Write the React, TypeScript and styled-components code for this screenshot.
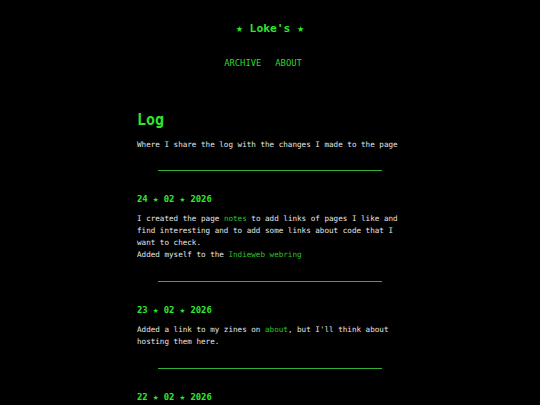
import React from 'react';
import styled, { createGlobalStyle } from 'styled-components';

const GlobalStyle = createGlobalStyle`
  body {
    margin: 0;
    background: #000;
    color: #e6e6e6;
    font-family: 'DejaVu Sans Mono', 'Liberation Mono', monospace;
  }
`;

const Header = styled.header`
  display: flex;
  flex-direction: column;
  align-items: center;
  padding-top: 21px;
`;

const SiteTitle = styled.div`
  color: #2ee62e;
  font-weight: bold;
  font-size: 11.3px;
  line-height: 16px;
`;

const Nav = styled.nav`
  display: flex;
  margin-top: 20px;
`;

const NavLink = styled.a`
  color: #2ed62e;
  text-decoration: none;
  font-size: 8.8px;
  line-height: 12px;
  margin-right: 14px;
`;

const Main = styled.main`
  width: 266px;
  margin: 41px auto 0;
`;

const Title = styled.h1`
  margin: 0;
  color: #2ee62e;
  font-size: 15px;
  line-height: 20px;
`;

const Intro = styled.p`
  margin: 9px 0 0;
  font-size: 7.6px;
  line-height: 12px;
`;

const Entry = styled.section`
  display: flex;
  flex-direction: column;
`;

const Divider = styled.hr`
  width: 224px;
  margin: 19px auto 0;
  border: 0;
  border-top: 1px solid #33b033;
`;

const DateHeading = styled.h2`
  margin: 22px 0 0;
  color: #2ee62e;
  font-size: 8.9px;
  line-height: 12px;
`;

const Body = styled.div`
  margin: 8px 0 1px;
  font-size: 7.6px;
  line-height: 12px;
`;

const GreenLink = styled.a`
  color: #2cc42c;
  text-decoration: none;
`;

interface IEntry {
  date: string;
  lines: React.ReactNode[];
}

const entries: IEntry[] = [
  {
    date: '24 ★ 02 ★ 2026',
    lines: [
      <>
        I created the page <GreenLink href='#'>notes</GreenLink> to add links of pages I like and find
        interesting and to add some links about code that I want to check.
      </>,
      <>
        Added myself to the <GreenLink href='#'>Indieweb webring</GreenLink>
      </>,
    ],
  },
  {
    date: '23 ★ 02 ★ 2026',
    lines: [
      <>
        Added a link to my zines on <GreenLink href='#'>about</GreenLink>, but I'll think about hosting
        them here.
      </>,
    ],
  },
  {
    date: '22 ★ 02 ★ 2026',
    lines: [],
  },
];

const App: React.FC = () => {
  return (
    <>
      <GlobalStyle />
      <Header>
        <SiteTitle>★ Loke's ★</SiteTitle>
        <Nav>
          <NavLink href='#'>ARCHIVE</NavLink>
          <NavLink href='#'>ABOUT</NavLink>
        </Nav>
      </Header>
      <Main>
        <Title>Log</Title>
        <Intro>Where I share the log with the changes I made to the page</Intro>
        {entries.map((entry) => (
          <Entry key={entry.date}>
            <Divider />
            <DateHeading>{entry.date}</DateHeading>
            {entry.lines.length > 0 && (
              <Body>
                {entry.lines.map((line, i) => (
                  <div key={i}>{line}</div>
                ))}
              </Body>
            )}
          </Entry>
        ))}
      </Main>
    </>
  );
};

export default App;
